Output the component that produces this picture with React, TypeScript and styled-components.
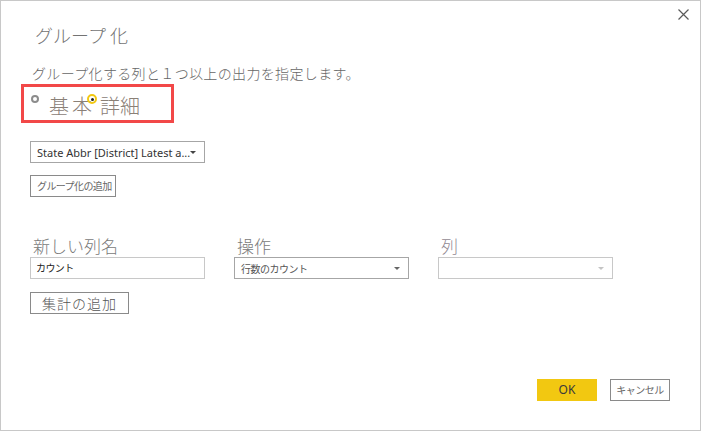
import React from 'react';
import styled, {createGlobalStyle} from "styled-components";

const GlobalStyle = createGlobalStyle`
  html, body {
    margin: 0;
    padding: 0;
    background: #ffffff;
  }
  * {
    box-sizing: border-box;
  }
`

type ColumnType = {
    label: string
    value: string
    kind: 'text' | 'select'
    disabled?: boolean
}

const columns: ColumnType[] = [
    {label: '新しい列名', value: 'カウント', kind: 'text'},
    {label: '操作', value: '行数のカウント', kind: 'select'},
    {label: '列', value: '', kind: 'select', disabled: true},
]

export default function App() {
    return (
        <>
            <GlobalStyle/>
            <StyledDialog>
                <StyledClose aria-label="close">
                    <svg width="11" height="11" viewBox="0 0 11 11">
                        <path d="M0.5 0.5 L10.5 10.5 M10.5 0.5 L0.5 10.5" stroke="#5a5a5a" strokeWidth="1.2"/>
                    </svg>
                </StyledClose>
                <StyledTitle>グループ 化</StyledTitle>
                <StyledDescription>グループ化する列と１つ以上の出力を指定します。</StyledDescription>
                <StyledRadioGroup>
                    <StyledRadio/>
                    <StyledRadioLabel>基本</StyledRadioLabel>
                    <StyledRadio checked/>
                    <StyledRadioLabel $second>詳細</StyledRadioLabel>
                </StyledRadioGroup>
                <StyledSelect $width={175} $dark>
                    <StyledSelectText>State Abbr [District] Latest a...</StyledSelectText>
                    <StyledArrow $color="#444"/>
                </StyledSelect>
                <StyledSmallButton>グループ化の追加</StyledSmallButton>
                <StyledColumns>
                    {columns.map(c => (
                        <StyledColumn key={c.label}>
                            <StyledFieldLabel $disabled={c.disabled}>{c.label}</StyledFieldLabel>
                            {c.kind === 'text'
                                ? <StyledInput>{c.value}</StyledInput>
                                : <StyledSelect $width={175} $dark={!c.disabled}>
                                    <StyledSelectValue>{c.value}</StyledSelectValue>
                                    <StyledArrow $color={c.disabled ? '#c4c4c4' : '#666'}/>
                                </StyledSelect>}
                        </StyledColumn>
                    ))}
                </StyledColumns>
                <StyledAggregateButton>集計の追加</StyledAggregateButton>
                <StyledFooter>
                    <StyledOkButton>OK</StyledOkButton>
                    <StyledCancelButton>キャンセル</StyledCancelButton>
                </StyledFooter>
            </StyledDialog>
        </>
    );
}

const jpFont = `"Noto Sans CJK JP", "Noto Sans", sans-serif`

const StyledDialog = styled.div`
  position: relative;
  width: 701px;
  height: 431px;
  border: 1px solid #c8c8c8;
  padding: 22px 0 0 29px;
  display: flex;
  flex-direction: column;
  align-items: flex-start;
  font-family: ${jpFont};
  background: #fff;
`
const StyledClose = styled.div`
  position: absolute;
  top: 8px;
  right: 11px;
  width: 11px;
  height: 11px;
  line-height: 0;
`
const StyledTitle = styled.div`
  font-size: 18px;
  line-height: 24px;
  color: #737373;
  font-weight: 300;
  margin-left: 5px;
`
const StyledDescription = styled.div`
  margin-top: 16px;
  margin-left: 2px;
  font-size: 14px;
  line-height: 20px;
  color: #666;
  font-weight: 300;
  letter-spacing: 0.35px;
`
const StyledRadioGroup = styled.div`
  margin-top: 1px;
  margin-left: -9px;
  width: 153px;
  height: 39px;
  border: 3px solid #f24848;
  padding-left: 7px;
  display: flex;
  align-items: center;
`
const StyledRadio = styled.span<{ checked?: boolean }>`
  align-self: flex-start;
  margin-top: ${props => props.checked ? '7px' : '8px'};
  margin-left: ${props => props.checked ? '-8px' : '0'};
  width: ${props => props.checked ? '10px' : '8px'};
  height: ${props => props.checked ? '10px' : '8px'};
  border-radius: 50%;
  border: 2px solid ${props => props.checked ? '#f2c811' : '#8c8c8c'};
  display: flex;
  align-items: center;
  justify-content: center;
  flex-shrink: 0;

  &:after {
    content: '';
    display: ${props => props.checked ? 'block' : 'none'};
    width: 3px;
    height: 3px;
    border-radius: 50%;
    background: #222;
  }
`
const StyledRadioLabel = styled.span<{ $second?: boolean }>`
  margin-left: ${props => props.$second ? '3px' : '10px'};
  font-size: 20px;
  line-height: 24px;
  letter-spacing: ${props => props.$second ? '0' : '3px'};
  color: #8a8077;
  font-weight: 300;
  margin-top: 4px;
`
const StyledSelect = styled.div<{ $width: number, $dark?: boolean }>`
  width: ${props => props.$width}px;
  height: 22px;
  border: 1px solid ${props => props.$dark ? '#a6a6a6' : '#c8c8c8'};
  display: flex;
  align-items: center;
  padding: 0 6px 0 6px;
  margin-top: 18px;
`
const StyledSelectText = styled.span`
  flex: 1;
  font-family: "Noto Sans", "Open Sans", sans-serif;
  font-size: 11px;
  color: #333;
  white-space: nowrap;
  letter-spacing: 0;
`
const StyledSelectValue = styled.span`
  flex: 1;
  font-size: 10px;
  color: #555;
  white-space: nowrap;
  letter-spacing: -0.5px;
`
const StyledArrow = styled.span<{ $color: string }>`
  width: 0;
  height: 0;
  border-left: 3px solid transparent;
  border-right: 3px solid transparent;
  border-top: 3px solid ${props => props.$color};
  margin-right: 2px;
`
const StyledSmallButton = styled.div`
  margin-top: 12px;
  width: 86px;
  height: 22px;
  border: 1px solid #8a8a8a;
  padding-left: 6px;
  font-size: 10px;
  line-height: 20px;
  color: #666;
  white-space: nowrap;
  overflow: hidden;
  letter-spacing: -0.6px;
`
const StyledColumns = styled.div`
  margin-top: 37px;
  display: flex;
  gap: 29px;
`
const StyledColumn = styled.div`
  display: flex;
  flex-direction: column;

  & > ${StyledSelect} {
    margin-top: 0;
  }
`
const StyledFieldLabel = styled.div<{ $disabled?: boolean }>`
  font-size: 17px;
  line-height: 23px;
  color: ${props => props.$disabled ? '#938a93' : '#7a7a7a'};
  font-weight: 300;
  margin-left: 3px;
`
const StyledInput = styled.div`
  width: 175px;
  height: 22px;
  border: 1px solid #c8c8c8;
  padding-left: 5px;
  font-size: 10px;
  line-height: 20px;
  color: #222;
  letter-spacing: -0.6px;
`
const StyledAggregateButton = styled.div`
  margin-top: 13px;
  width: 99px;
  height: 22px;
  border: 1px solid #8a8a8a;
  font-size: 14px;
  line-height: 20px;
  color: #555;
  font-weight: 300;
  text-align: center;
  letter-spacing: 1px;
`
const StyledFooter = styled.div`
  align-self: stretch;
  margin-top: 65px;
  padding-right: 30px;
  display: flex;
  justify-content: flex-end;
  gap: 13px;
`
const StyledOkButton = styled.div`
  width: 60px;
  height: 22px;
  background: #f2c811;
  font-family: "Noto Sans", sans-serif;
  font-size: 12px;
  line-height: 22px;
  color: #3a3a3a;
  text-align: center;
`
const StyledCancelButton = styled.div`
  width: 60px;
  height: 22px;
  border: 1px solid #8a8a8a;
  font-size: 10px;
  line-height: 20px;
  color: #666;
  text-align: center;
  letter-spacing: -0.5px;
`
